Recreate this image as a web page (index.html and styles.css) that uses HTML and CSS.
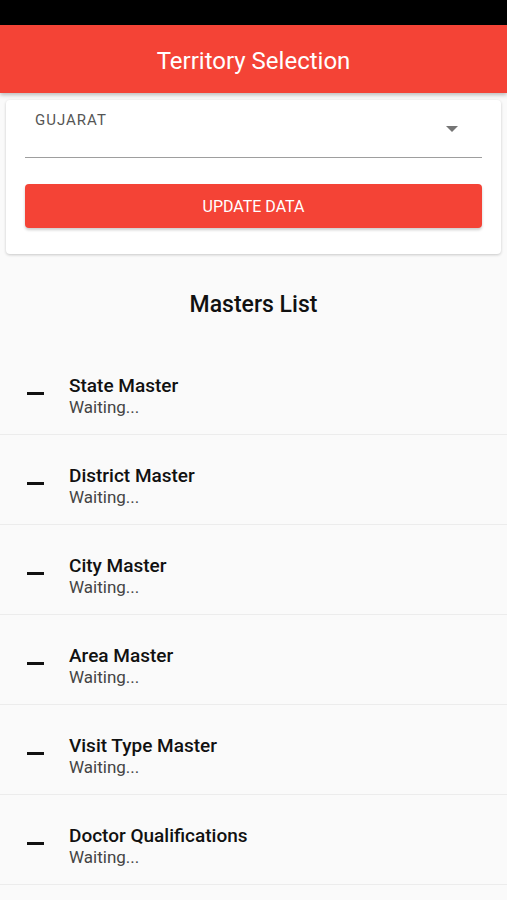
FILE: index.html
```html
<!DOCTYPE html>
<html lang="en">
<head>
    <meta charset="UTF-8">
    <meta name="viewport" content="width=device-width, initial-scale=1.0">
    <title>Territory Selection</title>
    <link rel="stylesheet" href="styles.css">
</head>
<body>
    <div class="status-bar"></div>
    <header class="app-bar">Territory Selection</header>

    <div class="card">
        <div class="select">
            <span class="select-value">GUJARAT</span>
            <span class="select-arrow"></span>
        </div>
        <button class="update-btn">UPDATE DATA</button>
    </div>

    <h2 class="list-title">Masters List</h2>

    <div class="master-list">
        <div class="master-item">
            <span class="dash"></span>
            <div class="master-text">
                <div class="master-name">State Master</div>
                <div class="master-status">Waiting...</div>
            </div>
        </div>
        <div class="master-item">
            <span class="dash"></span>
            <div class="master-text">
                <div class="master-name">District Master</div>
                <div class="master-status">Waiting...</div>
            </div>
        </div>
        <div class="master-item">
            <span class="dash"></span>
            <div class="master-text">
                <div class="master-name">City Master</div>
                <div class="master-status">Waiting...</div>
            </div>
        </div>
        <div class="master-item">
            <span class="dash"></span>
            <div class="master-text">
                <div class="master-name">Area Master</div>
                <div class="master-status">Waiting...</div>
            </div>
        </div>
        <div class="master-item">
            <span class="dash"></span>
            <div class="master-text">
                <div class="master-name">Visit Type Master</div>
                <div class="master-status">Waiting...</div>
            </div>
        </div>
        <div class="master-item">
            <span class="dash"></span>
            <div class="master-text">
                <div class="master-name">Doctor Qualifications</div>
                <div class="master-status">Waiting...</div>
            </div>
        </div>
    </div>
</body>
</html>
```

FILE: styles.css
```css
body {
    margin: 0;
    background-color: #fafafa;
    font-family: Roboto, "Liberation Sans", sans-serif;
    color: #111;
    overflow: hidden;
}
.status-bar {
    height: 25px;
    background-color: #000;
}
.app-bar {
    height: 68px;
    padding-top: 3px;
    box-sizing: border-box;
    background-color: #f44336;
    color: #fff;
    font-size: 24px;
    font-weight: 400;
    display: flex;
    align-items: center;
    justify-content: center;
    box-shadow: 0 2px 4px rgba(0, 0, 0, 0.25);
    position: relative;
}
.card {
    margin: 7px 6px 0;
    background-color: #fff;
    border-radius: 4px;
    box-shadow: 0 1px 3px rgba(0, 0, 0, 0.2);
    padding: 12px 19px 26px;
}
.select {
    height: 45px;
    border-bottom: 1px solid #9e9e9e;
    display: flex;
    justify-content: space-between;
    padding: 0 24px 0 10px;
    margin-bottom: 26px;
}
.select-value {
    font-size: 15px;
    color: #555;
    letter-spacing: 1px;
    line-height: 16px;
}
.select-arrow {
    margin-top: 14px;
    width: 0;
    height: 0;
    border-left: 6px solid transparent;
    border-right: 6px solid transparent;
    border-top: 6px solid #757575;
}
.update-btn {
    display: block;
    width: 100%;
    height: 44px;
    border: none;
    border-radius: 4px;
    background-color: #f44336;
    color: #fff;
    font-family: Roboto, "Liberation Sans", sans-serif;
    font-size: 16px;
    font-weight: 400;
    box-shadow: 0 2px 3px rgba(0, 0, 0, 0.2);
}
.list-title {
    margin: 36px 0 0;
    text-align: center;
    font-size: 23px;
    font-weight: 500;
    line-height: 30px;
}
.master-list {
    margin-top: 25px;
}
.master-item {
    display: flex;
    align-items: center;
    height: 89px;
    border-bottom: 1px solid #ececec;
    padding-left: 27px;
}
.dash {
    width: 17px;
    height: 3px;
    background-color: #111;
    margin-top: 8px;
    margin-right: 25px;
}
.master-text {
    padding-top: 13px;
}
.master-name {
    font-size: 19px;
    font-weight: 500;
    line-height: 22px;
}
.master-status {
    font-size: 17px;
    color: #444;
    line-height: 21px;
}
```
